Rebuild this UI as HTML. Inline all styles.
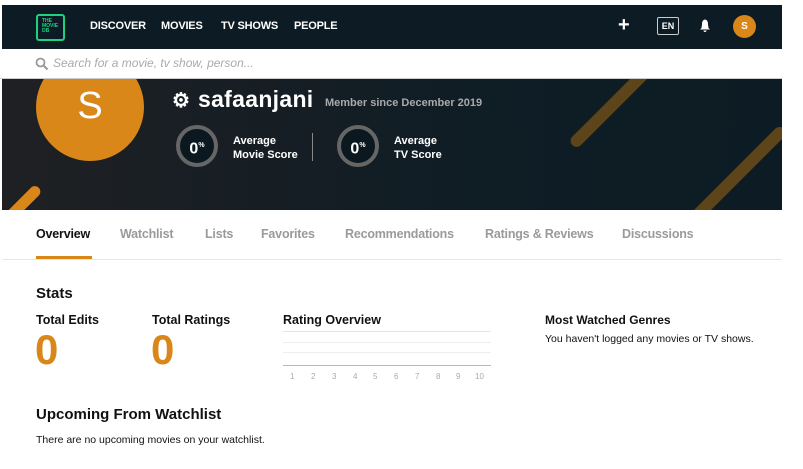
<!DOCTYPE html>
<html><head><meta charset="utf-8"><style>
*{margin:0;padding:0;box-sizing:border-box}
body{width:803px;height:469px;background:#fff;font-family:"Liberation Sans",sans-serif;position:relative;overflow:hidden;color:#111}
.a{position:absolute;white-space:nowrap}
.nav{left:2px;top:5px;width:780px;height:44px;background:#0d1c24}
.nv{color:#fff;font-weight:bold;font-size:11px;top:20px;letter-spacing:-0.2px}
.hero{left:2px;top:79px;width:780px;height:131px;background:linear-gradient(90deg,#1f2023,#0f1d25 60%,#0d1c24);overflow:hidden}
.ring{width:42px;height:42px;border-radius:50%;background:#0b1820;border:4px solid #666;color:#fff;font-weight:bold;font-size:16px;text-align:center;line-height:34px}
.tab{top:227px;font-size:12.5px;font-weight:bold;color:#9a9a9a;letter-spacing:-0.2px}
.tick{top:372px;font-size:8px;color:#aaa}
</style></head><body>
<div class="a nav"></div>
<div class="a" style="left:36px;top:14px;width:29px;height:27px;border:2px solid #1ed180;border-radius:3px;color:#1ed180;font-size:5px;font-weight:bold;line-height:5px;padding:3px 0 0 4px">THE<br>MOVIE<br>DB</div>
<div class="a nv" style="left:90px">DISCOVER</div>
<div class="a nv" style="left:161px">MOVIES</div>
<div class="a nv" style="left:221px">TV SHOWS</div>
<div class="a nv" style="left:294px">PEOPLE</div>
<div class="a" style="left:618px;top:14px;color:#fff;font-size:20px;font-weight:bold">+</div>
<div class="a" style="left:657px;top:17px;width:22px;height:18px;border:1px solid #ccc;border-radius:2px;color:#fff;font-size:9px;font-weight:bold;text-align:center;line-height:16px">EN</div>
<svg class="a" style="left:699px;top:19px" width="12" height="13" viewBox="0 0 12 13"><path d="M6 0.5C3.5 1 3 3 3 5.5L2.5 9 1 10.5h10L9.5 9 9 5.5C9 3 8.5 1 6 0.5z M4.5 11.5h3a1.5 1.5 0 0 1-3 0z" fill="#fff"/></svg>
<div class="a" style="left:733px;top:15px;width:23px;height:23px;border-radius:50%;background:#d98719;color:#fff;font-size:10px;font-weight:bold;text-align:center;line-height:23px">S</div>
<svg class="a" style="left:35px;top:57px" width="14" height="14" viewBox="0 0 14 14"><circle cx="5.5" cy="5.5" r="4" stroke="#999" stroke-width="1.8" fill="none"/><path d="M8.5 8.5l4 4" stroke="#999" stroke-width="2"/></svg>
<div class="a" style="left:53px;top:56px;font-size:12px;font-style:italic;color:#aaa">Search for a movie, tv show, person...</div>
<div class="a" style="left:0;top:78px;width:782px;height:1px;background:#ccc"></div>
<div class="a hero">
<div class="a" style="left:605px;top:-32px;width:12px;height:115px;border-radius:6px;background:#5e4419;transform:rotate(45deg)"></div>
<div class="a" style="left:728px;top:30px;width:12px;height:135px;border-radius:6px;background:#5e4419;transform:rotate(45deg)"></div>
<div class="a" style="left:10px;top:100px;width:11px;height:60px;border-radius:6px;background:#d98719;transform:rotate(45deg)"></div>
<div class="a" style="left:34px;top:-26px;width:108px;height:108px;border-radius:50%;background:#d98719;color:#fff;font-size:38px;text-align:center;line-height:106px">S</div>
<div class="a" style="left:170px;top:9px;color:#fff;font-size:20px;font-weight:bold">⚙</div>
<div class="a" style="left:196px;top:7px;color:#fff;font-size:23px;font-weight:bold;letter-spacing:0.3px">safaanjani</div>
<div class="a" style="left:323px;top:18px;color:#aaa;font-size:11px;font-weight:bold">Member since December 2019</div>
<div class="a ring" style="left:174px;top:46px">0<sup style="font-size:7px">%</sup></div>
<div class="a" style="left:231px;top:55px;color:#fff;font-size:11px;font-weight:bold;line-height:14px">Average<br>Movie Score</div>
<div class="a" style="left:310px;top:54px;width:1px;height:28px;background:#888"></div>
<div class="a ring" style="left:335px;top:46px">0<sup style="font-size:7px">%</sup></div>
<div class="a" style="left:392px;top:55px;color:#fff;font-size:11px;font-weight:bold;line-height:14px">Average<br>TV Score</div>
</div>
<div class="a tab" style="left:36px;color:#111">Overview</div>
<div class="a" style="left:36px;top:256px;width:56px;height:3px;background:#d98719"></div>
<div class="a tab" style="left:120px">Watchlist</div>
<div class="a tab" style="left:205px">Lists</div>
<div class="a tab" style="left:261px">Favorites</div>
<div class="a tab" style="left:345px">Recommendations</div>
<div class="a tab" style="left:485px">Ratings &amp; Reviews</div>
<div class="a tab" style="left:622px">Discussions</div>
<div class="a" style="left:2px;top:259px;width:780px;height:1px;background:#e6e6e6"></div>
<div class="a" style="left:36px;top:285px;font-size:15px;font-weight:bold">Stats</div>
<div class="a" style="left:36px;top:313px;font-size:12.5px;font-weight:bold">Total Edits</div>
<div class="a" style="left:152px;top:313px;font-size:12.5px;font-weight:bold">Total Ratings</div>
<div class="a" style="left:35px;top:326px;font-size:42px;font-weight:bold;color:#d98719">0</div>
<div class="a" style="left:151px;top:326px;font-size:42px;font-weight:bold;color:#d98719">0</div>
<div class="a" style="left:283px;top:313px;font-size:12.5px;font-weight:bold">Rating Overview</div>
<div class="a" style="left:283px;top:331px;width:208px;height:1px;background:#e4e4e4"></div>
<div class="a" style="left:283px;top:342px;width:208px;height:1px;background:#eee"></div>
<div class="a" style="left:283px;top:352px;width:208px;height:1px;background:#eee"></div>
<div class="a" style="left:283px;top:365px;width:208px;height:1px;background:#bbb"></div>
<div class="a tick" style="left:290px">1</div><div class="a tick" style="left:311px">2</div><div class="a tick" style="left:332px">3</div><div class="a tick" style="left:353px">4</div><div class="a tick" style="left:373px">5</div><div class="a tick" style="left:394px">6</div><div class="a tick" style="left:415px">7</div><div class="a tick" style="left:436px">8</div><div class="a tick" style="left:456px">9</div><div class="a tick" style="left:475px">10</div>
<div class="a" style="left:545px;top:313px;font-size:12px;font-weight:bold">Most Watched Genres</div>
<div class="a" style="left:545px;top:333px;font-size:10.5px">You haven't logged any movies or TV shows.</div>
<div class="a" style="left:36px;top:406px;font-size:15px;font-weight:bold">Upcoming From Watchlist</div>
<div class="a" style="left:36px;top:434px;font-size:10.5px">There are no upcoming movies on your watchlist.</div>
</body></html>
